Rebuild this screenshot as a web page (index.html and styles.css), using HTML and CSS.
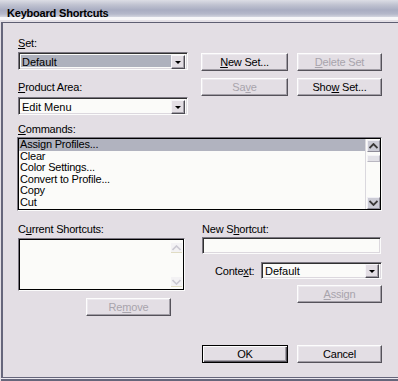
FILE: index.html
```html
<!DOCTYPE html>
<html>
<head>
<meta charset="utf-8">
<link rel="stylesheet" href="styles.css">
</head>
<body>
<div class="titlebar">Keyboard Shortcuts</div>
<div class="frame">
  <div class="top">
    <div class="col">
      <div class="lbl"><u>S</u>et:</div>
      <div class="field select sel-set mt2"><span class="val">Default</span><span class="drop"></span></div>
      <div class="lbl mt11"><u>P</u>roduct Area:</div>
      <div class="field select mt3"><span class="val">Edit Menu</span><span class="drop"></span></div>
    </div>
    <div class="btns">
      <div class="btn"><span><u>N</u>ew Set...</span></div>
      <div class="btn dis"><span><u>D</u>elete Set</span></div>
      <div class="btn dis"><span>Sa<u>v</u>e</span></div>
      <div class="btn"><span>Sho<u>w</u> Set...</span></div>
    </div>
  </div>

  <div class="lbl mt8"><u>C</u>ommands:</div>
  <div class="field list">
    <div class="rows">
      <div class="row sel">Assign Profiles...</div>
      <div class="row">Clear</div>
      <div class="row">Color Settings...</div>
      <div class="row">Convert to Profile...</div>
      <div class="row">Copy</div>
      <div class="row">Cut</div>
    </div>
    <div class="sb">
      <div class="sb-btn"><svg width="9" height="6" viewBox="0 0 9 6"><polyline points="0.5,5 4.5,1 8.5,5" fill="none" stroke="#3a3838" stroke-width="1.8"/></svg></div>
      <div class="thumb"></div>
      <div class="sb-space"></div>
      <div class="sb-btn"><svg width="9" height="6" viewBox="0 0 9 6"><polyline points="0.5,1 4.5,5 8.5,1" fill="none" stroke="#3a3838" stroke-width="1.8"/></svg></div>
    </div>
  </div>

  <div class="bottom">
    <div class="col">
      <div class="lbl">C<u>u</u>rrent Shortcuts:</div>
      <div class="field cur mt2">
        <div class="faint"><svg width="9" height="6" viewBox="0 0 9 6"><polyline points="0.5,5 4.5,1 8.5,5" fill="none" stroke="#cbc9d2" stroke-width="1.6"/></svg></div>
        <div class="faint"><svg width="9" height="6" viewBox="0 0 9 6"><polyline points="0.5,1 4.5,5 8.5,1" fill="none" stroke="#cbc9d2" stroke-width="1.6"/></svg></div>
      </div>
      <div class="btn dis remove"><span>Re<u>m</u>ove</span></div>
    </div>
    <div class="col">
      <div class="lbl">New S<u>h</u>ortcut:</div>
      <div class="field input mt1"></div>
      <div class="ctx">
        <span class="ctx-lbl">Conte<u>x</u>t:</span>
        <div class="field select ctx-sel"><span class="val">Default</span><span class="drop"></span></div>
      </div>
      <div class="btn dis assign"><span><u>A</u>ssign</span></div>
    </div>
  </div>

  <div class="footer">
    <div class="btn default ok"><span>OK</span></div>
    <div class="btn cancel"><span>Cancel</span></div>
  </div>
</div>
</body>
</html>
```

FILE: styles.css
```css
* { box-sizing: border-box; }

body {
  margin: 0;
  width: 398px;
  height: 381px;
  overflow: hidden;
  background: #e3dee4;
  font-family: "Liberation Sans", Arial, sans-serif;
  font-size: 11px;
  color: #000;
}

.titlebar {
  height: 22px;
  padding: 7px 0 0 7px;
  line-height: 13px;
  font-weight: bold;
  letter-spacing: -0.2px;
  background: linear-gradient(to bottom,
    #dcdde5 0px, #bfc2d0 5px, #a9adc2 10px, #b4b8ca 14px, #d4d6e0 17px,
    #f7f7f9 17px, #f7f7f9 20px, #e4e0e6 20px, #e4e0e6 22px);
}

.frame {
  margin-left: 1px;
  height: 356px;
  border-left: 2px solid #66667b;
  border-top: 1px solid #5e5e72;
  border-bottom: 1px solid #66667b;
  box-shadow: 0 1px 0 #ebe8ee, 0 3px 0 #66667b;
  padding: 14px 16px 0 15px;
}

.lbl {
  height: 13px;
  line-height: 13px;
  letter-spacing: -0.2px;
  white-space: nowrap;
}

.mt1 { margin-top: 1px; }
.mt2 { margin-top: 2px; }
.mt3 { margin-top: 3px; }
.mt8 { margin-top: 8px; }
.mt11 { margin-top: 11px; }

.top {
  display: grid;
  grid-template-columns: 170px 181px;
  column-gap: 13px;
}

.col {
  display: flex;
  flex-direction: column;
}

.btns {
  display: grid;
  grid-template-columns: 87px 85px;
  grid-auto-rows: 18px;
  column-gap: 9px;
  row-gap: 7px;
  margin-top: 16px;
  align-content: start;
}

.btn {
  height: 18px;
  border: 1px solid;
  border-color: #fdfdfd #55525a #55525a #fdfdfd;
  box-shadow: inset -1px -1px 0 #a29ea6, inset 1px 1px 0 #ece9ee;
  background: #e3dee4;
  display: flex;
  align-items: center;
  justify-content: center;
  letter-spacing: -0.2px;
  line-height: 13px;
  white-space: nowrap;
}

.btn.dis { color: #a8a4ac; }

.btn.default {
  border: 1px solid #000;
  box-shadow: inset 1px 1px 0 #fdfdfd, inset -1px -1px 0 #55525a, inset -2px -2px 0 #a29ea6;
}

.field {
  border: 1px solid;
  border-color: #7a7680 #fbfbfb #fbfbfb #7a7680;
  box-shadow: inset 1px 1px 0 #303030, inset -1px -1px 0 #dcd8de;
  background: #fbfbf9;
}

.select {
  height: 18px;
  display: flex;
  padding: 2px;
}

.select .val {
  flex: 1;
  line-height: 14px;
  padding-left: 1px;
  white-space: nowrap;
}

.sel-set .val { background: #aeb1bd; }

.drop {
  width: 14px;
  height: 14px;
  border: 1px solid;
  border-color: #f6f4f8 #4e4c54 #4e4c54 #f6f4f8;
  box-shadow: inset -1px -1px 0 #a29ea6;
  background: #e3dee4;
  display: flex;
  align-items: center;
  justify-content: center;
}

.drop::after {
  content: "";
  border-left: 3px solid transparent;
  border-right: 3px solid transparent;
  border-top: 3px solid #000;
}

.list {
  margin: 1px 0 0 -1px;
  height: 74px;
  display: flex;
  padding: 1px 0 1px 0;
  box-shadow: inset 0 0 0 1px #000;
}

.rows {
  flex: 1;
  overflow: hidden;
  padding-left: 1px;
}

.row {
  height: 11.5px;
  line-height: 11.5px;
  padding-left: 1px;
  letter-spacing: -0.2px;
  white-space: nowrap;
}

.row.sel { background: #b1b3bf; }

.sb {
  width: 15px;
  border-left: 1px solid #dad8de;
  display: flex;
  flex-direction: column;
  margin-right: 1px;
}

.sb-btn {
  height: 12px;
  margin: 1px 0 0 1px;
  background: #cbcbd5;
  border: 1px solid;
  border-color: #f0eff4 #8e8c98 #8e8c98 #f0eff4;
  display: flex;
  align-items: center;
  justify-content: center;
}

.thumb {
  height: 7px;
  margin: 3px 0 0 1px;
  background: #e2e1e7;
  border: 1px solid;
  border-color: #f4f3f7 #b9b7c1 #b9b7c1 #f4f3f7;
}

.sb-space { flex: 1; }

.bottom {
  margin-top: 12px;
  display: grid;
  grid-template-columns: 167px 180px;
  column-gap: 17px;
}

.cur {
  height: 53px;
  display: flex;
  flex-direction: column;
  align-items: flex-end;
  justify-content: space-between;
  padding: 4px 2px 3px 0;
  box-shadow: inset 0 0 0 1px #000;
}

.faint {
  width: 11px;
  height: 10px;
  background: #f3f2f4;
  border-bottom: 1px solid #e0dcc4;
  display: flex;
  align-items: center;
  justify-content: center;
}

.remove {
  margin: 7px 0 0 68px;
  width: 85px;
}

.input {
  height: 17px;
  width: 179px;
}

.ctx {
  margin-top: 8px;
  height: 17px;
  display: flex;
  align-items: center;
}

.ctx-lbl {
  margin-left: 13px;
  width: 46px;
  letter-spacing: -0.2px;
  white-space: nowrap;
}

.ctx-sel {
  flex: 1;
  height: 17px;
  padding: 1px 2px 2px 2px;
}

.assign {
  margin: 6px 0 0 95px;
  width: 85px;
}

.footer {
  margin: 29px 0 0 184px;
  display: flex;
  gap: 9px;
}

.ok { width: 86px; }
.cancel { width: 85px; }
```
